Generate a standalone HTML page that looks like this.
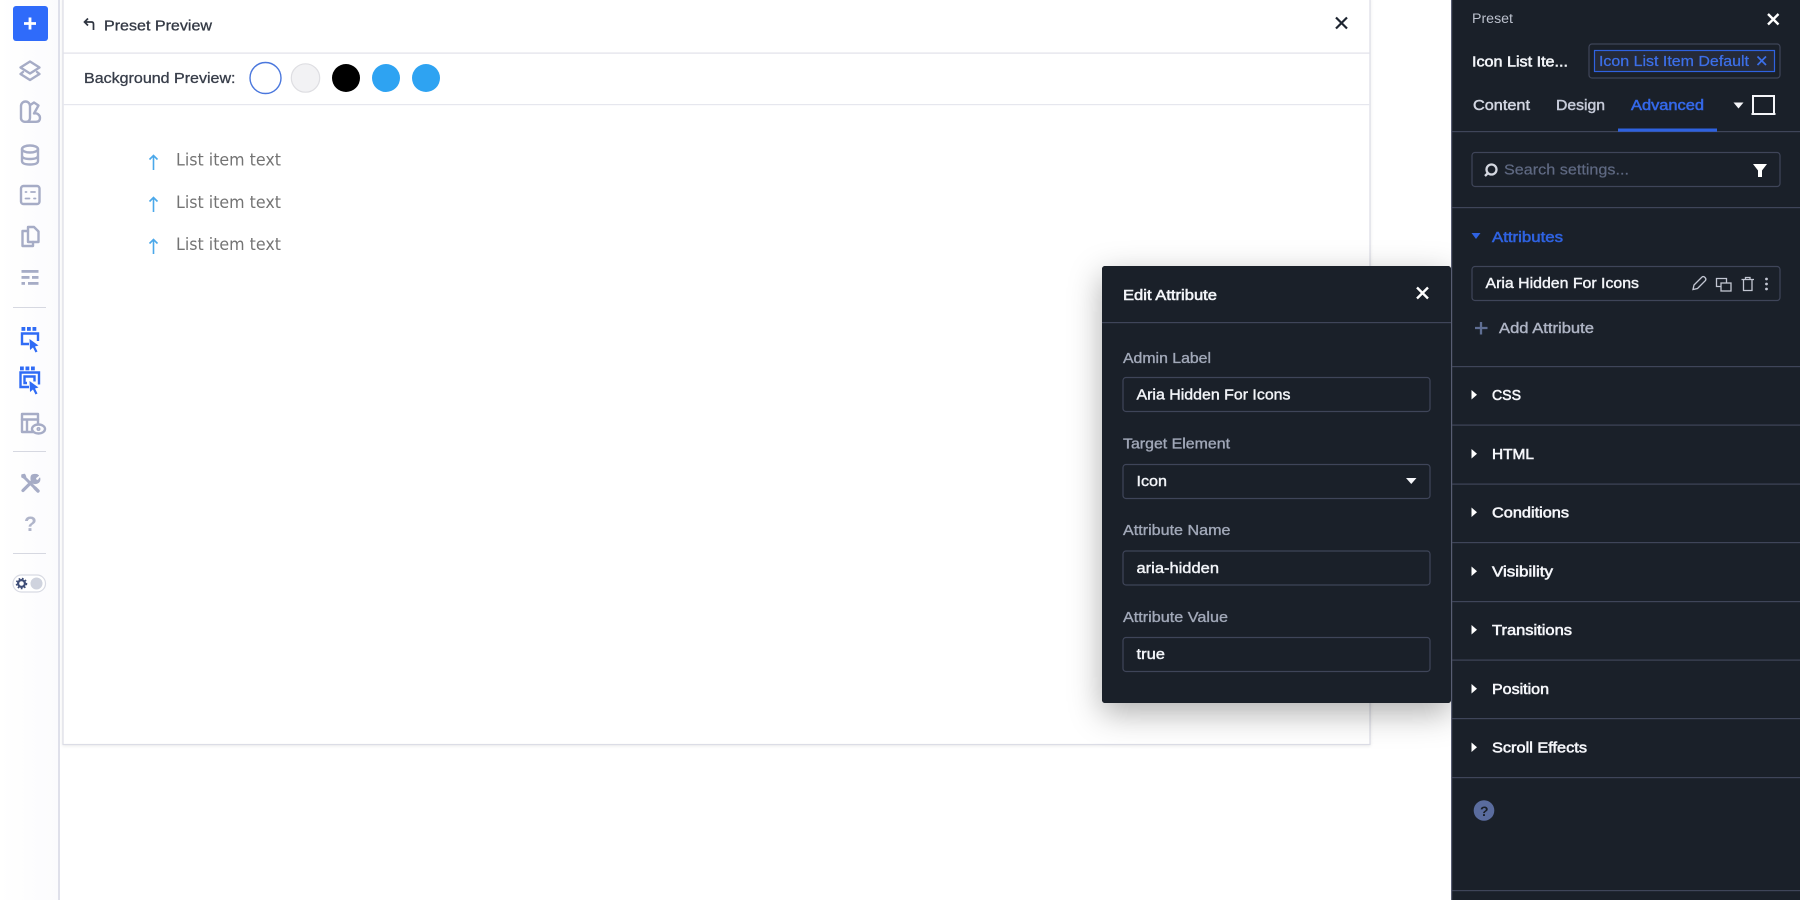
<!DOCTYPE html>
<html lang="en">
<head>
<meta charset="utf-8">
<title>Preset Preview</title>
<style>
html,body{margin:0;padding:0;width:1800px;height:900px;overflow:hidden;background:#fff}
svg{display:block}
text{font-family:"Liberation Sans",Arial,sans-serif;font-size:14.5px}
.m{stroke-width:.3px;paint-order:stroke}
.mw{fill:#f2f4f8;stroke:#f2f4f8;stroke-width:.4px}
.ic{fill:none;stroke:#a6acc6;stroke-width:2.4;stroke-linejoin:round;stroke-linecap:round}
.bl{fill:none;stroke:#2f6bf5;stroke-width:2.400}
.bf{fill:#2f6bf5}
.ln{fill:#3f4559}
.box{fill:#1a2029;stroke:#3f4559;stroke-width:1.2}
.sec{fill:#f5f6fa;stroke:#f5f6fa;stroke-width:.55px}
</style>
</head>
<body>
<svg xmlns="http://www.w3.org/2000/svg" width="1800" height="900" viewBox="0 0 1800 900">
<defs>
<linearGradient id="sb" x1="0" x2="1" y1="0" y2="0"><stop offset="0" stop-color="#fff"/><stop offset="1" stop-color="#fbfbfd"/></linearGradient>
</defs>
<rect width="1800" height="900" fill="#fff"/>
<!-- sidebar -->
<rect x="0" y="0" width="58" height="900" fill="url(#sb)"/>
<rect x="58" y="0" width="2" height="900" fill="#dfe0ea"/>
<!-- preview card -->
<rect x="63" y="-2" width="1307" height="746.500" fill="#fff" stroke="#dcdde6" stroke-width="1.200" style="filter:drop-shadow(0 1px 1.500px rgba(0,0,0,.08))"/>
<rect x="63" y="52.500" width="1307" height="1.200" fill="#e0e1ea"/>
<rect x="63" y="104" width="1307" height="1.200" fill="#e6e7ee"/>
<path d="M93.500 30v-6q0-2-2-2h-7M88 18.500l-3.500 3.500 3.500 3.500" fill="none" stroke="#2f3541" stroke-width="1.700"/>
<text x="104" y="30.500" textLength="108" lengthAdjust="spacingAndGlyphs" fill="#333944" stroke="#333944" class="m">Preset Preview</text>
<path d="M1336 17.500l11 11m0-11l-11 11" stroke="#1d2430" stroke-width="2.200" fill="none"/>
<text x="84" y="83" textLength="151.500" lengthAdjust="spacingAndGlyphs" fill="#373d49" stroke="#373d49" class="m">Background Preview:</text>
<circle cx="265.500" cy="78" r="15.500" fill="#fff" stroke="#4a77dd" stroke-width="1.400"/>
<circle cx="305.500" cy="78" r="14.200" fill="#f2f2f4" stroke="#dedee2" stroke-width="1.200"/>
<circle cx="346" cy="78" r="14" fill="#000"/>
<circle cx="386" cy="78" r="14" fill="#2ea3f2"/>
<circle cx="426" cy="78" r="14" fill="#2ea3f2"/>
<g fill="none" stroke="#4ba8ea" stroke-width="1.600">
<path d="M153.500 170v-14.500M149.500 159.500l4-4 4 4"/>
<path d="M153.500 212v-14.500M149.500 201.500l4-4 4 4"/>
<path d="M153.500 254v-14.500M149.500 243.500l4-4 4 4"/>
</g>
<g fill="#747474">
<text x="176" y="165.500" style="font-family:'DejaVu Sans',sans-serif;font-size:16.500px" textLength="105" lengthAdjust="spacingAndGlyphs">List item text</text>
<text x="176" y="208" style="font-family:'DejaVu Sans',sans-serif;font-size:16.500px" textLength="105" lengthAdjust="spacingAndGlyphs">List item text</text>
<text x="176" y="250" style="font-family:'DejaVu Sans',sans-serif;font-size:16.500px" textLength="105" lengthAdjust="spacingAndGlyphs">List item text</text>
</g>
<!-- sidebar icons -->
<rect x="13" y="6" width="35" height="35" rx="3" fill="#2f6bfa"/>
<path d="M30 17.500v12M24 23.500h12" stroke="#fff" stroke-width="2.800" fill="none"/>
<g class="ic">
<path d="M30 61.500l9.500 6-9.500 6-9.500-6z"/>
<path d="M23 72l-2.500 2 9.500 6 9.500-6-2.500-2"/>
<path d="M21 117.500v-11.500a4.500 4.500 0 0 1 9 0v12a3.800 3.800 0 0 1-3.800 3.800h-1.400a3.800 3.800 0 0 1-3.800-4.300z"/>
<path d="M31 104.500l3-2 4.500 3-4.500 8a4.700 4.700 0 0 1 6 4.500q0 3.800-4 3.800h-9"/>
<ellipse cx="30" cy="149" rx="8" ry="3.500"/>
<path d="M22 149v12q0 3.500 8 3.500t8-3.500v-12M22 155.500q0 3.500 8 3.500t8-3.500"/>
<rect x="21" y="186" width="18.500" height="18" rx="2.500"/>
<path d="M25.500 192h1M31 192h4M25.500 198.500h4M34 198.500h1.500" stroke-width="1.800"/>
<path d="M28 227h6l4.500 4.500v10.500h-10.500z"/>
<path d="M28 231h-5.500v15h10.500v-4"/>
</g>
<g fill="#a6acc6">
<rect x="21.500" y="270" width="17" height="2.800"/>
<rect x="21.500" y="276" width="8" height="2.800"/><rect x="32" y="276" width="6.500" height="2.800"/>
<rect x="21.500" y="282" width="3.500" height="2.800"/><rect x="28" y="282" width="10.500" height="2.800"/>
</g>
<rect x="13" y="307" width="33" height="1" fill="#d6d8e1"/>
<rect x="13" y="451" width="33" height="1" fill="#d6d8e1"/>
<rect x="13" y="553" width="33" height="1" fill="#d6d8e1"/>
<!-- blue pointer icons -->
<g class="bf">
<rect x="21.500" y="327" width="3.800" height="3.800"/><rect x="27" y="327" width="3.800" height="3.800"/><rect x="32.500" y="327" width="3.800" height="3.800"/>
<path d="M29.500 339l9 6.500-3.500 1 2.500 5-2 1-2.500-5-3 2.500z"/>
<rect x="20" y="366.500" width="3.800" height="3.800"/><rect x="25.500" y="366.500" width="3.800" height="3.800"/><rect x="31" y="366.500" width="3.800" height="3.800"/>
<path d="M29.500 381l9 6.500-3.500 1 2.500 5-2 1-2.500-5-3 2.500z"/>
</g>
<path class="bl" d="M29 344h-7v-10.500h16v7.500"/>
<path class="bl" d="M29 387h-8.500v-14.500h18.500v12"/>
<path class="bl" stroke-width="1.800" d="M27 383h-2.500v-6.500h10v5"/>
<!-- template eye -->
<g class="ic">
<path d="M33 432h-11v-18h16v13"/>
<path d="M22 419.500h16M27 419.500v12"/>
<ellipse cx="38.500" cy="429" rx="6.500" ry="4.500" fill="#fcfcfd"/>
<circle cx="38.500" cy="429" r=".8"/>
</g>
<!-- tools: wrench + screwdriver -->
<g fill="none" stroke="#a6acc6" stroke-linecap="round" stroke-linejoin="round">
<path d="M23.500 476.500l13 13" stroke-width="3"/>
<path d="M22 475l2.500-.5 1 2-1.500 1.500-2-1z" fill="#a6acc6" stroke-width="1.500"/>
<path d="M23 490.500l10.500-10.500" stroke-width="3.200"/>
<path d="M38.500 475.500l-3 2.500.5 2 2 .5 1.800-2.500q.5 3-1.300 4.500t-4.500 1-3-4 1-4.500 5-.500z" fill="#a6acc6" stroke-width="1"/>
<path d="M35 488l3 3" stroke-width="3.400"/>
</g>
<text x="24" y="531" style="font-size:21px;font-weight:bold" fill="#b0b5ca">?</text>
<!-- toggle -->
<rect x="13" y="575" width="32.500" height="17" rx="8.500" fill="#fff" stroke="#d8dae3" stroke-width="1.200"/>
<circle cx="21.500" cy="583.500" r="3.400" fill="none" stroke="#3f4e78" stroke-width="2.200"/>
<circle cx="21.500" cy="583.500" r="5" fill="none" stroke="#3f4e78" stroke-width="1.500" stroke-dasharray="1.700 1.700"/>
<circle cx="36.500" cy="583.500" r="6" fill="#cfd3de"/>
<!-- modal shadow -->
<rect x="1102" y="266" width="349" height="437" rx="3" fill="#1a2029" style="filter:drop-shadow(0 10px 16px rgba(0,0,0,.32))"/>
<!-- right panel -->
<rect x="1451" y="0" width="349" height="900" fill="#1a2029"/>
<rect x="1451" y="0" width="1.200" height="900" fill="#585d72"/>
<text x="1472" y="23" textLength="41" lengthAdjust="spacingAndGlyphs" style="font-size:13.500px" fill="#bcc1cd">Preset</text>
<path d="M1768 14l10.500 10.500m0-10.500l-10.500 10.500" stroke="#fff" stroke-width="2.400" fill="none"/>
<text x="1472" y="66.500" textLength="96" lengthAdjust="spacingAndGlyphs" fill="#f2f4f8" stroke="#f2f4f8" style="stroke-width:.55px">Icon List Ite...</text>
<rect x="1589" y="44" width="191" height="34" rx="3" class="box"/>
<rect x="1594.500" y="50.500" width="180" height="21" fill="#252a38" stroke="#2f62e0" stroke-width="1.200"/>
<text x="1599" y="66" textLength="150" lengthAdjust="spacingAndGlyphs" fill="#3c6fe8" stroke="#3c6fe8" style="stroke-width:.25px">Icon List Item Default</text>
<path d="M1757.500 56.500l8.500 8.500m0-8.500l-8.500 8.500" stroke="#3c6fe8" stroke-width="1.700" fill="none"/>
<text x="1473" y="110" textLength="57" lengthAdjust="spacingAndGlyphs" fill="#d3d7e2" stroke="#d3d7e2" style="stroke-width:.45px">Content</text>
<text x="1556" y="110" textLength="49" lengthAdjust="spacingAndGlyphs" fill="#c5cad8" stroke="#c5cad8" style="stroke-width:.45px">Design</text>
<text x="1631" y="110" textLength="73" lengthAdjust="spacingAndGlyphs" fill="#3468e8" stroke="#3468e8" style="stroke-width:.55px">Advanced</text>
<path d="M1733.500 102.500h10l-5 6z" fill="#f4f5f8"/>
<rect x="1753" y="96" width="21" height="18" fill="none" stroke="#f4f5f8" stroke-width="2"/>
<rect x="1751.500" y="113" width="24" height="2" fill="#f4f5f8"/>
<rect x="1452" y="131" width="348" height="1.200" fill="#3f4559"/>
<rect x="1618" y="128.500" width="99" height="3.200" fill="#2f62e0"/>
<rect x="1472" y="152.500" width="308" height="34" rx="3" class="box"/>
<circle cx="1491.500" cy="169.500" r="5" fill="none" stroke="#d4d7e0" stroke-width="2.300"/>
<path d="M1488 173l-3 3" stroke="#d4d7e0" stroke-width="2.300"/>
<text x="1504" y="174.500" textLength="125" lengthAdjust="spacingAndGlyphs" fill="#5f6982" stroke="#5f6982" style="stroke-width:.2px">Search settings...</text>
<path d="M1753 164h14l-5 6.500v6.500h-4v-6.500z" fill="#fff"/>
<rect x="1452" y="207" width="348" height="1.200" fill="#3f4559"/>
<path d="M1471.500 233h9l-4.500 6z" fill="#2f62e0"/>
<text x="1492" y="242" textLength="71" lengthAdjust="spacingAndGlyphs" fill="#2f62e0" stroke="#2f62e0" style="stroke-width:.55px">Attributes</text>
<rect x="1472" y="266.500" width="308" height="34" rx="3" class="box"/>
<text x="1485.500" y="288" textLength="153.500" lengthAdjust="spacingAndGlyphs" class="mw">Aria Hidden For Icons</text>
<g fill="none" stroke="#c2c6d2" stroke-width="1.300">
<path d="M1693 289.500l1-4.500 8-8q1.500-1 3 .5t.5 3l-8 8z"/>
<path d="M1721 286.500h-4.500v-8h10v4.500"/>
<rect x="1721" y="283" width="10" height="8"/>
<path d="M1743.500 280v10.500h8.500v-10.500M1741.500 279.500h12.500M1745.500 279.500v-2h4.500v2"/>
</g>
<circle cx="1766.500" cy="279" r="1.400" fill="#c2c6d2"/>
<circle cx="1766.500" cy="284" r="1.400" fill="#c2c6d2"/>
<circle cx="1766.500" cy="289" r="1.400" fill="#c2c6d2"/>
<path d="M1481 322v12.500M1475 328h12.500" stroke="#5f6e93" stroke-width="2.300" fill="none"/>
<text x="1499" y="333" textLength="95" lengthAdjust="spacingAndGlyphs" fill="#aeb4c4" stroke="#aeb4c4" style="stroke-width:.4px">Add Attribute</text>
<g class="ln">
<rect x="1452" y="366" width="348" height="1.200"/>
<rect x="1452" y="424.500" width="348" height="1.200"/>
<rect x="1452" y="483.500" width="348" height="1.200"/>
<rect x="1452" y="542" width="348" height="1.200"/>
<rect x="1452" y="601" width="348" height="1.200"/>
<rect x="1452" y="659.500" width="348" height="1.200"/>
<rect x="1452" y="718" width="348" height="1.200"/>
<rect x="1452" y="777" width="348" height="1.200"/>
<rect x="1452" y="890" width="348" height="1.200"/>
</g>
<g fill="#fff">
<path d="M1471.500 390v9.500l5.500-4.700z"/>
<path d="M1471.500 449v9.500l5.500-4.700z"/>
<path d="M1471.500 507.500v9.500l5.500-4.700z"/>
<path d="M1471.500 566.500v9.500l5.500-4.700z"/>
<path d="M1471.500 625v9.500l5.500-4.700z"/>
<path d="M1471.500 684v9.500l5.500-4.700z"/>
<path d="M1471.500 742.500v9.500l5.500-4.700z"/>
</g>
<text x="1492" y="400" textLength="29" lengthAdjust="spacingAndGlyphs" class="sec">CSS</text>
<text x="1492" y="459" textLength="42" lengthAdjust="spacingAndGlyphs" class="sec">HTML</text>
<text x="1492" y="517.500" textLength="77" lengthAdjust="spacingAndGlyphs" class="sec">Conditions</text>
<text x="1492" y="576.500" textLength="61" lengthAdjust="spacingAndGlyphs" class="sec">Visibility</text>
<text x="1492" y="635" textLength="80" lengthAdjust="spacingAndGlyphs" class="sec">Transitions</text>
<text x="1492" y="694" textLength="57" lengthAdjust="spacingAndGlyphs" class="sec">Position</text>
<text x="1492" y="752.500" textLength="95" lengthAdjust="spacingAndGlyphs" class="sec">Scroll Effects</text>
<circle cx="1484" cy="810.500" r="10.300" fill="#5a6c9e"/>
<text x="1480" y="816" style="font-size:14px;font-weight:bold" fill="#1a2029">?</text>
<!-- modal -->
<rect x="1102" y="266" width="349" height="437" rx="3" fill="#1a2029"/>
<rect x="1102" y="322" width="349" height="1.200" fill="#3f4559"/>
<text x="1123" y="300" textLength="94" lengthAdjust="spacingAndGlyphs" fill="#f2f4f8" stroke="#f2f4f8" style="stroke-width:.55px">Edit Attribute</text>
<path d="M1417 287.500l11 11m0-11l-11 11" stroke="#fff" stroke-width="2.400" fill="none"/>
<text x="1123" y="363" textLength="88" lengthAdjust="spacingAndGlyphs" fill="#a1a8b8" stroke="#a1a8b8" style="stroke-width:.35px">Admin Label</text>
<rect x="1123" y="377.500" width="307" height="34" rx="3" class="box"/>
<text x="1136.500" y="399.500" textLength="154" lengthAdjust="spacingAndGlyphs" class="mw">Aria Hidden For Icons</text>
<text x="1123" y="448.500" textLength="107" lengthAdjust="spacingAndGlyphs" fill="#a1a8b8" stroke="#a1a8b8" style="stroke-width:.35px">Target Element</text>
<rect x="1123" y="464.500" width="307" height="34" rx="3" class="box"/>
<text x="1136.500" y="486" textLength="30.500" lengthAdjust="spacingAndGlyphs" class="mw">Icon</text>
<path d="M1406 478h10.500l-5.250 6z" fill="#f5f6fa"/>
<text x="1123" y="535" textLength="107.500" lengthAdjust="spacingAndGlyphs" fill="#a1a8b8" stroke="#a1a8b8" style="stroke-width:.35px">Attribute Name</text>
<rect x="1123" y="551" width="307" height="34" rx="3" class="box"/>
<text x="1136.500" y="573" textLength="82.500" lengthAdjust="spacingAndGlyphs" class="mw">aria-hidden</text>
<text x="1123" y="622" textLength="105" lengthAdjust="spacingAndGlyphs" fill="#a1a8b8" stroke="#a1a8b8" style="stroke-width:.35px">Attribute Value</text>
<rect x="1123" y="637.500" width="307" height="34" rx="3" class="box"/>
<text x="1136.500" y="659" textLength="28.500" lengthAdjust="spacingAndGlyphs" class="mw">true</text>
</svg>
</body>
</html>
